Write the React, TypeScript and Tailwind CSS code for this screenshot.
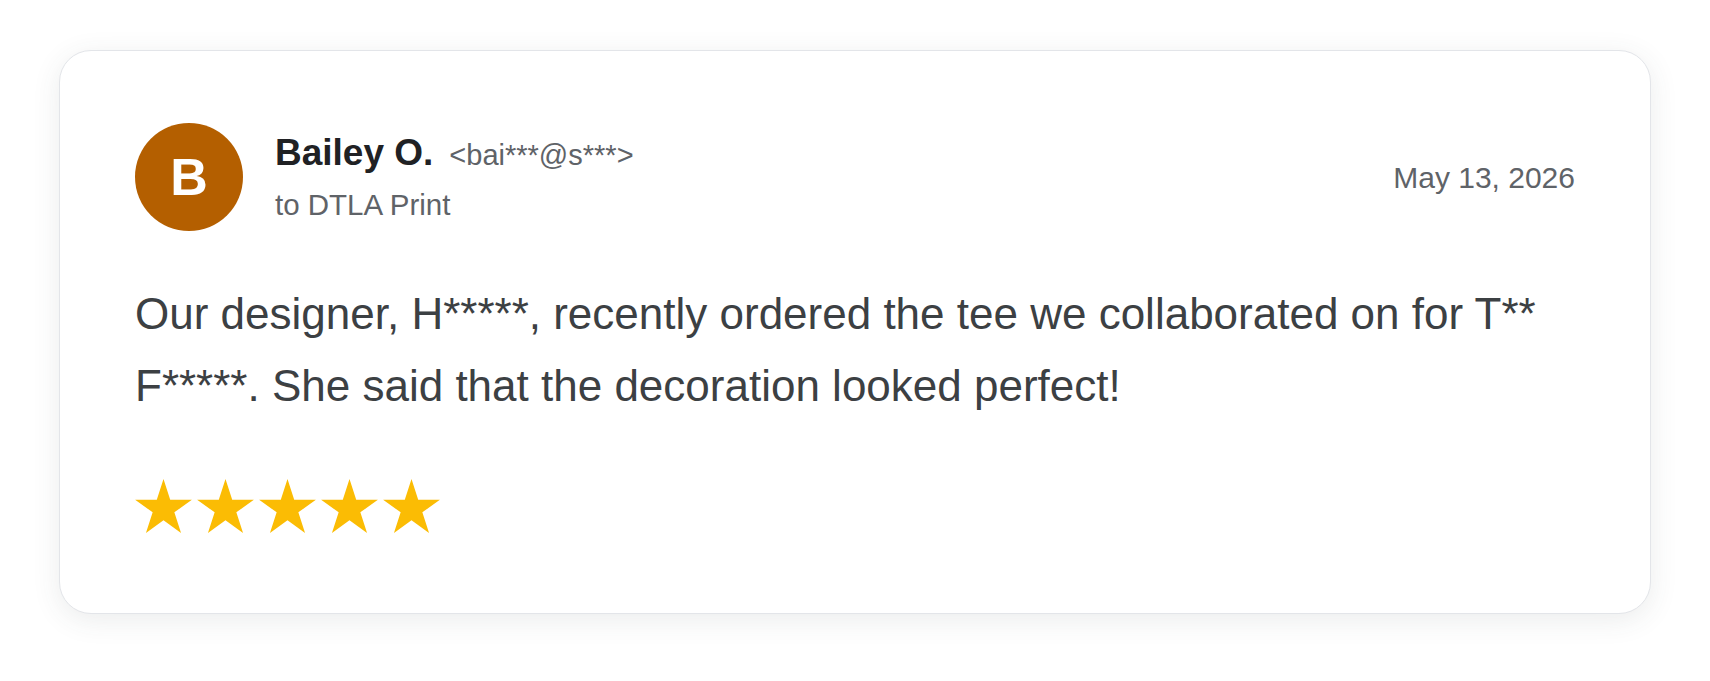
import React from "react";

const STAR_POINTS =
  "0,-50 11.23,-15.45 47.55,-15.45 18.17,5.9 29.39,40.45 0,19.1 -29.39,40.45 -18.17,5.9 -47.55,-15.45 -11.23,-15.45";

function Star() {
  return (
    <svg
      viewBox="-47.55 -50 95.1 90.45"
      className="w-[57px] h-[54px]"
      aria-hidden="true"
    >
      <polygon points={STAR_POINTS} fill="#fbbc04" />
    </svg>
  );
}

function ReviewCard() {
  return (
    <div className="w-full bg-white border border-[#e3e5e9] rounded-[32px] shadow-[0_6px_28px_rgba(60,64,67,0.10)] pt-[72px] pb-[80px] px-[75px]">
      {/* header */}
      <div className="flex items-center justify-between">
        <div className="flex items-center">
          <div className="w-[108px] h-[108px] rounded-full bg-[#b45f00] flex items-center justify-center text-white text-[52px] font-bold">
            B
          </div>
          <div className="ml-[32px] pt-[4px] flex flex-col">
            <div className="flex items-baseline gap-[16px] leading-[46px]">
              <span className="text-[37px] font-bold text-[#202124]">
                Bailey O.
              </span>
              <span className="text-[29px] text-[#5f6368]">
                &lt;bai***@s***&gt;
              </span>
            </div>
            <p className="mt-[4px] text-[29.5px] leading-[46px] text-[#5f6368]">
              to DTLA Print
            </p>
          </div>
        </div>
        <p className="text-[30px] text-[#5f6368]">May 13, 2026</p>
      </div>

      {/* body */}
      <p className="mt-[47px] text-[44px] leading-[72px] text-[#3c4043]">
        Our designer, H*****, recently ordered the tee we collaborated on for
        T** F*****. She said that the decoration looked perfect!
      </p>

      {/* rating */}
      <div className="mt-[57px] flex gap-[5px]">
        {[0, 1, 2, 3, 4].map((i) => (
          <Star key={i} />
        ))}
      </div>
    </div>
  );
}

export default function App() {
  return (
    <div className="min-h-[681px] bg-white px-[59px] pt-[50px] font-['Liberation_Sans',Arial,sans-serif]">
      <ReviewCard />
    </div>
  );
}
